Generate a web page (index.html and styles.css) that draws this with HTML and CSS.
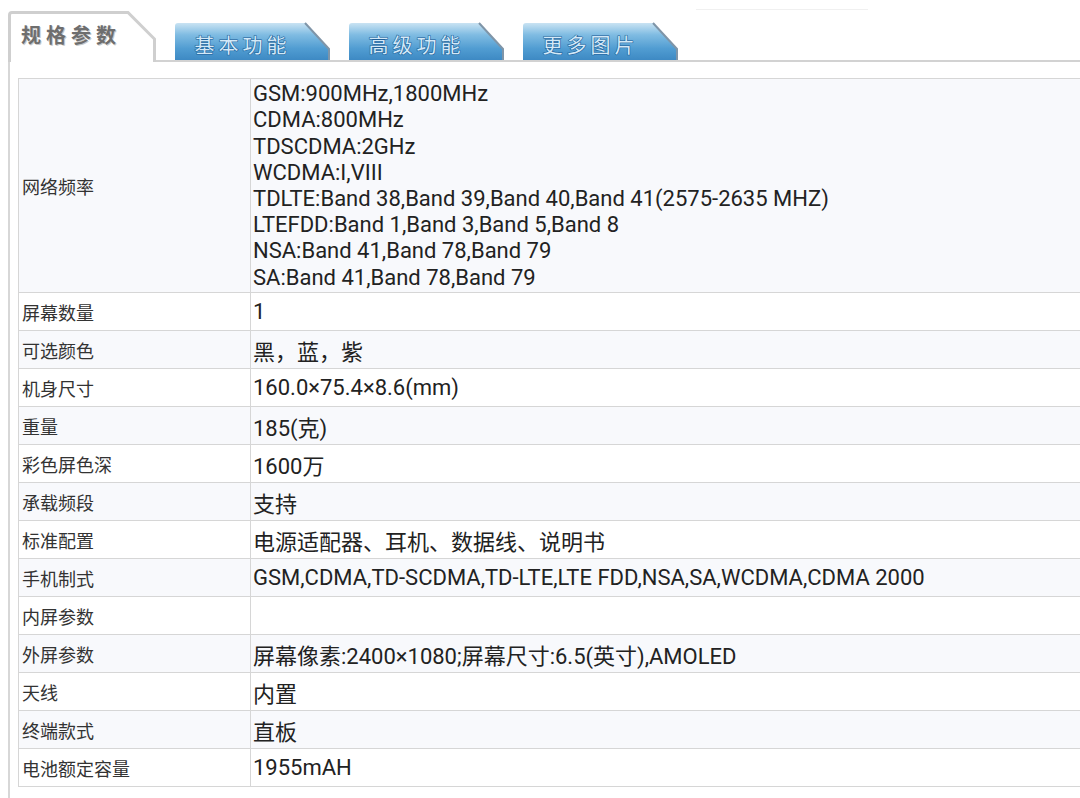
FILE: index.html
```html
<!DOCTYPE html>
<html lang="zh-CN">
<head>
<meta charset="utf-8">
<title>规格参数</title>
<link rel="stylesheet" href="styles.css">
</head>
<body>
<div class="page">
  <div class="topline"></div>
  <div class="tabbar">
    <div class="tab active">
      <svg class="tab-bg" width="148" height="51" viewBox="0 0 148 51">
        <path d="M1.5,51 V4 Q1.5,1.5 4,1.5 H120 L146.5,28 V51" fill="#fff" stroke="#cfcfcf" stroke-width="3"/>
      </svg>
      <span class="tab-label">规格参数</span>
    </div>
    <div class="tab blue">
      <svg class="tab-bg" width="155" height="40" viewBox="0 0 155 40">
        <defs>
          <linearGradient id="g1" x1="0" y1="0" x2="0" y2="1">
            <stop offset="0" stop-color="#c9e3f3"/>
            <stop offset="0.3" stop-color="#80bce2"/>
            <stop offset="0.65" stop-color="#519dd2"/>
            <stop offset="1" stop-color="#3a86c1"/>
          </linearGradient>
        </defs>
        <path d="M0,40 V4 Q0,1 3,1 H130 L154,27 V40 Z" fill="url(#g1)"/>
        <path d="M130,1 L154,27 V40" fill="none" stroke="#7f95a8" stroke-width="2"/>
      </svg>
      <span class="tab-label">基本功能</span>
    </div>
    <div class="tab blue">
      <svg class="tab-bg" width="155" height="40" viewBox="0 0 155 40">
        <path d="M0,40 V4 Q0,1 3,1 H130 L154,27 V40 Z" fill="url(#g1)"/>
        <path d="M130,1 L154,27 V40" fill="none" stroke="#7f95a8" stroke-width="2"/>
      </svg>
      <span class="tab-label">高级功能</span>
    </div>
    <div class="tab blue">
      <svg class="tab-bg" width="155" height="40" viewBox="0 0 155 40">
        <path d="M0,40 V4 Q0,1 3,1 H130 L154,27 V40 Z" fill="url(#g1)"/>
        <path d="M130,1 L154,27 V40" fill="none" stroke="#7f95a8" stroke-width="2"/>
      </svg>
      <span class="tab-label">更多图片</span>
    </div>
    <div class="tab-fill"></div>
  </div>
  <div class="panel">
    <table class="spec">
      <colgroup><col class="c-label"><col class="c-value"></colgroup>
      <tr class="alt multi">
        <td class="label">网络频率</td>
        <td class="value">GSM:900MHz,1800MHz<br>CDMA:800MHz<br>TDSCDMA:2GHz<br>WCDMA:I,VIII<br>TDLTE:Band 38,Band 39,Band 40,Band 41(2575-2635 MHZ)<br>LTEFDD:Band 1,Band 3,Band 5,Band 8<br>NSA:Band 41,Band 78,Band 79<br>SA:Band 41,Band 78,Band 79</td>
      </tr>
      <tr><td class="label">屏幕数量</td><td class="value">1</td></tr>
      <tr class="alt"><td class="label">可选颜色</td><td class="value">黑，蓝，紫</td></tr>
      <tr><td class="label">机身尺寸</td><td class="value">160.0×75.4×8.6(mm)</td></tr>
      <tr class="alt"><td class="label">重量</td><td class="value">185(克)</td></tr>
      <tr><td class="label">彩色屏色深</td><td class="value">1600万</td></tr>
      <tr class="alt"><td class="label">承载频段</td><td class="value">支持</td></tr>
      <tr><td class="label">标准配置</td><td class="value">电源适配器、耳机、数据线、说明书</td></tr>
      <tr class="alt"><td class="label">手机制式</td><td class="value">GSM,CDMA,TD-SCDMA,TD-LTE,LTE FDD,NSA,SA,WCDMA,CDMA 2000</td></tr>
      <tr><td class="label">内屏参数</td><td class="value"></td></tr>
      <tr class="alt"><td class="label">外屏参数</td><td class="value">屏幕像素:2400×1080;屏幕尺寸:6.5(英寸),AMOLED</td></tr>
      <tr><td class="label">天线</td><td class="value">内置</td></tr>
      <tr class="alt"><td class="label">终端款式</td><td class="value">直板</td></tr>
      <tr><td class="label">电池额定容量</td><td class="value">1955mAH</td></tr>
    </table>
  </div>
</div>
</body>
</html>
```

FILE: styles.css
```css
html, body {
  margin: 0;
  padding: 0;
  background: #fff;
}
body {
  width: 1080px;
  height: 798px;
  overflow: hidden;
  font-family: Roboto, "Noto Sans CJK SC", sans-serif;
  color: #222;
}
.page {
  position: relative;
  padding: 11px 0 0 8px;
}
.topline {
  position: absolute;
  left: 696px;
  top: 9px;
  width: 172px;
  height: 1px;
  background: #f0f0f0;
}
.tabbar {
  display: flex;
  align-items: flex-end;
  height: 51px;
}
.tab {
  position: relative;
  display: flex;
  align-items: center;
  justify-content: center;
}
.tab-bg {
  position: absolute;
  left: 0;
  top: 0;
  display: block;
}
.tab-label {
  position: relative;
  font-family: "Noto Sans CJK SC", sans-serif;
}
.tab.active {
  width: 148px;
  height: 51px;
  justify-content: flex-start;
}
.tab.active .tab-label {
  margin: 0 0 0 13px;
  padding-bottom: 4px;
  font-size: 20px;
  font-weight: 700;
  letter-spacing: 5px;
  color: #6e6e6e;
  text-shadow: 1px 1px 0 #c9c9c9;
}
.tab.blue {
  width: 155px;
  height: 40px;
  margin-left: 19px;
}
.tab.blue .tab-label {
  padding-top: 4px;
  font-size: 20px;
  letter-spacing: 4px;
  color: #d3e9f8;
  -webkit-text-stroke: 1px #1f5f98;
  paint-order: stroke fill;
  text-shadow: 0 0 1px #1f5f98;
  margin-right: 20px;
}
.tab-fill {
  flex: 1;
  height: 51px;
  border-bottom: 2px solid #d2d2d2;
  box-sizing: border-box;
}
.tabbar .tab.blue::after {
  content: "";
  position: absolute;
  left: -19px;
  right: 0;
  bottom: 0;
  height: 2px;
  background: #d2d2d2;
}
.panel {
  border-left: 2px solid #d7d7d7;
  margin-top: -39px;
  padding: 55px 0 30px 8px;
}
.spec {
  border-collapse: collapse;
  width: 1100px;
  table-layout: fixed;
  background: #fff;
}
.c-label { width: 232px; }
.spec td {
  border: 1px solid #d6d6d6;
  height: 38px;
  padding: 0 3px;
  box-sizing: border-box;
  vertical-align: middle;
}
.spec tr.alt td {
  background: #f8f9fc;
}
.spec td.label {
  font-family: "Noto Sans CJK SC", sans-serif;
  font-size: 18px;
  color: #333;
  padding-left: 3px;
}
.spec td.value {
  font-size: 22px;
  color: #222;
  white-space: nowrap;
  padding-left: 2px;
}
.spec tr.multi td {
  height: 214px;
}
.spec tr.multi td.value {
  line-height: 26.2px;
  padding-top: 1px;
}
```
